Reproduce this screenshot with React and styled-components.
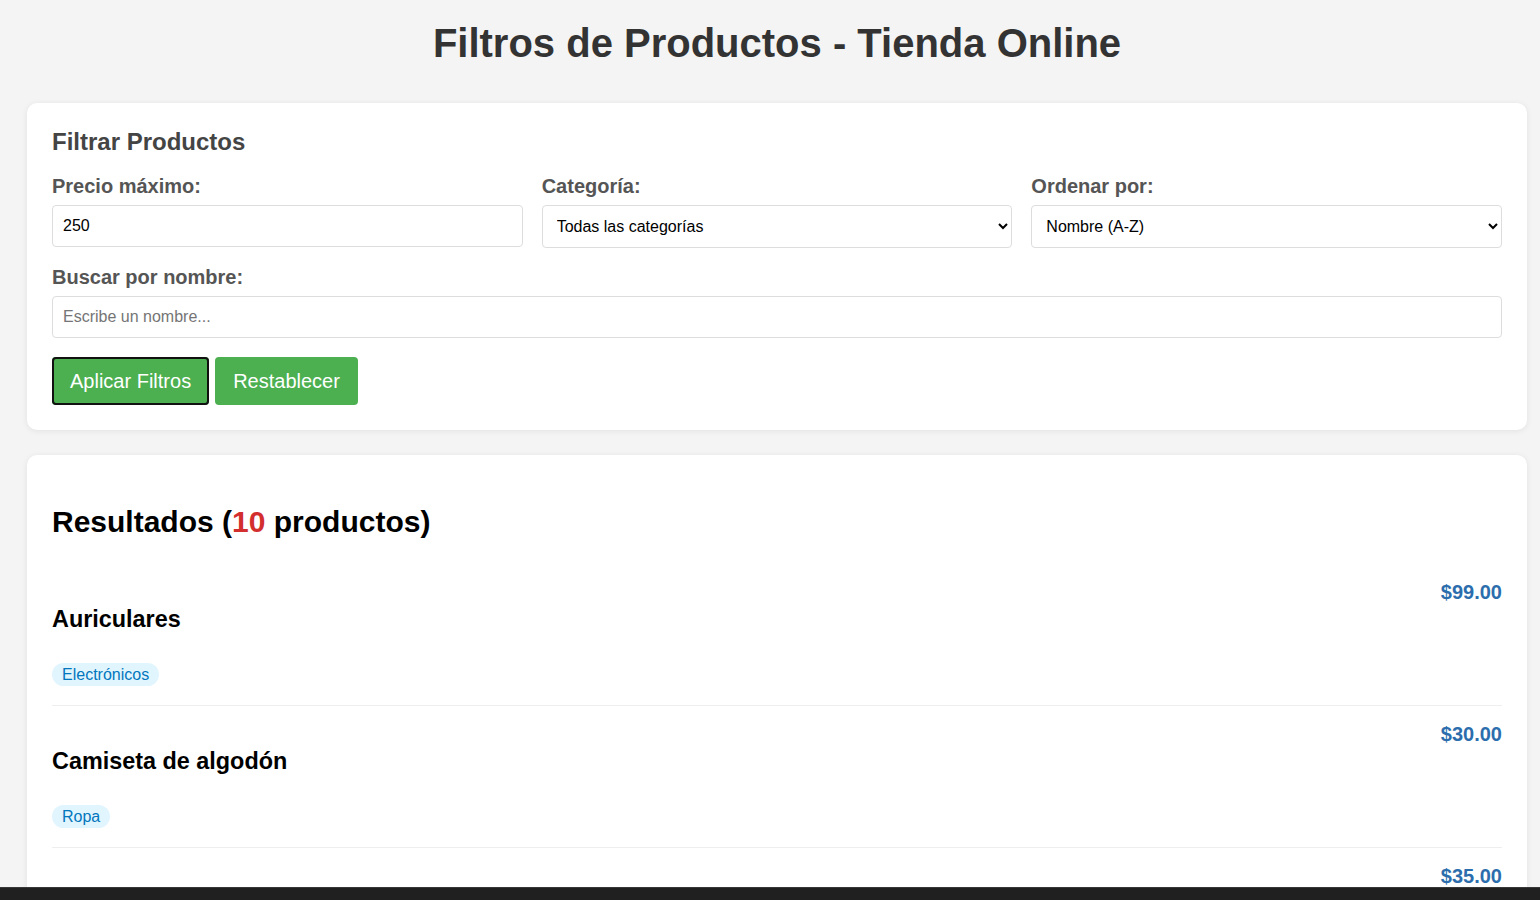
import styled, { createGlobalStyle } from "styled-components";

const products = [
    { name: "Auriculares", category: "Electrónicos", price: 99 },
    { name: "Camiseta de algodón", category: "Ropa", price: 30 },
    { name: "Zapatillas deportivas", category: "Ropa", price: 35 },
];

const GlobalStyle = createGlobalStyle`
    html, body {
        margin: 0;
        padding: 0;
        background: #f4f4f4;
        font-family: "Liberation Sans", Arial, sans-serif;
        font-size: 20px;
        color: #333;
    }
`

function App(){
    return(
        <>
            <GlobalStyle/>
            <Page>
                <Title>Filtros de Productos - Tienda Online</Title>
                <Card>
                    <PanelTitle>Filtrar Productos</PanelTitle>
                    <Row>
                        <Field>
                            <Label>Precio máximo:</Label>
                            <Input type="number" defaultValue="250"/>
                        </Field>
                        <Field>
                            <Label>Categoría:</Label>
                            <Select defaultValue="all">
                                <option value="all">Todas las categorías</option>
                                <option value="el">Electrónicos</option>
                                <option value="ro">Ropa</option>
                            </Select>
                        </Field>
                        <Field>
                            <Label>Ordenar por:</Label>
                            <Select defaultValue="az">
                                <option value="az">Nombre (A-Z)</option>
                                <option value="za">Nombre (Z-A)</option>
                            </Select>
                        </Field>
                    </Row>
                    <Field>
                        <Label>Buscar por nombre:</Label>
                        <Input type="text" placeholder="Escribe un nombre..."/>
                    </Field>
                    <Buttons>
                        <Button $focused>Aplicar Filtros</Button>
                        <Button>Restablecer</Button>
                    </Buttons>
                </Card>
                <Card>
                    <ResultsTitle>Resultados (<Count>10</Count> productos)</ResultsTitle>
                    {products.map((p) => (
                        <Item key={p.name}>
                            <Info>
                                <Name>{p.name}</Name>
                                <Badge>{p.category}</Badge>
                            </Info>
                            <Price>${p.price.toFixed(2)}</Price>
                        </Item>
                    ))}
                </Card>
            </Page>
            <Taskbar/>
        </>
    )
}

export default App

const Page = styled.div`
    width: 1500px;
    margin-left: 27px;
    padding-bottom: 40px;
`
const Title = styled.h1`
    margin: 0;
    padding: 20px 0 37px;
    text-align: center;
    font-size: 40px;
    line-height: 46px;
    font-weight: bold;
    color: #333;
`
const Card = styled.div`
    background: #fff;
    border-radius: 10px;
    box-shadow: 0 1px 6px rgba(0, 0, 0, 0.08);
    padding: 25px;
    margin-bottom: 25px;
`
const PanelTitle = styled.h2`
    margin: 0 0 20px;
    font-size: 24px;
    line-height: 27px;
    color: #444;
`
const Row = styled.div`
    display: grid;
    grid-template-columns: repeat(3, 1fr);
    gap: 19px;
    margin-bottom: 18px;
`
const Field = styled.div`
    display: flex;
    flex-direction: column;
`
const Label = styled.label`
    font-size: 20px;
    line-height: 23px;
    font-weight: bold;
    color: #555;
    margin-bottom: 7px;
`
const Input = styled.input`
    box-sizing: border-box;
    height: 42px;
    padding: 0 10px;
    border: 1px solid #ddd;
    border-radius: 4px;
    font-family: "Liberation Sans", Arial, sans-serif;
    font-size: 16px;
    color: #000;
    outline: none;
    &::placeholder {
        color: #757575;
    }
    &::-webkit-inner-spin-button {
        display: none;
    }
`
const Select = styled.select`
    box-sizing: border-box;
    height: 43px;
    padding: 0 10px;
    border: 1px solid #ddd;
    border-radius: 4px;
    background: #fff;
    font-family: "Liberation Sans", Arial, sans-serif;
    font-size: 16px;
    color: #000;
`
const Buttons = styled.div`
    display: flex;
    gap: 6px;
    margin-top: 19px;
`
const Button = styled.button`
    box-sizing: border-box;
    height: 48px;
    padding: 0 18px;
    border: none;
    border-radius: 4px;
    background: #4caf50;
    color: #fff;
    font-family: "Liberation Sans", Arial, sans-serif;
    font-size: 20px;
    box-shadow: ${(p) => (p.$focused ? "0 0 0 2px #111 inset" : "none")};
`
const ResultsTitle = styled.h2`
    margin: 25px 0;
    font-size: 30px;
    line-height: 34px;
    color: #000;
`
const Count = styled.span`
    color: #d32f2f;
`
const Item = styled.div`
    display: flex;
    justify-content: space-between;
    align-items: flex-start;
    padding: 17px 0 19px;
    border-bottom: 1px solid #eee;
`
const Info = styled.div`
    padding-top: 25px;
`
const Name = styled.h3`
    margin: 0 0 29px;
    font-size: 23.4px;
    line-height: 27px;
    color: #000;
`
const Badge = styled.span`
    display: inline-block;
    height: 23px;
    line-height: 23px;
    padding: 0 10px;
    border-radius: 12px;
    background: #e1f5fe;
    color: #0277bd;
    font-size: 16px;
`
const Price = styled.div`
    font-size: 20px;
    line-height: 23px;
    font-weight: bold;
    color: #2c6ead;
`
const Taskbar = styled.div`
    position: fixed;
    left: 0;
    right: 0;
    bottom: 0;
    height: 12px;
    background: #202020;
    border-top: 1px solid #383838;
`
